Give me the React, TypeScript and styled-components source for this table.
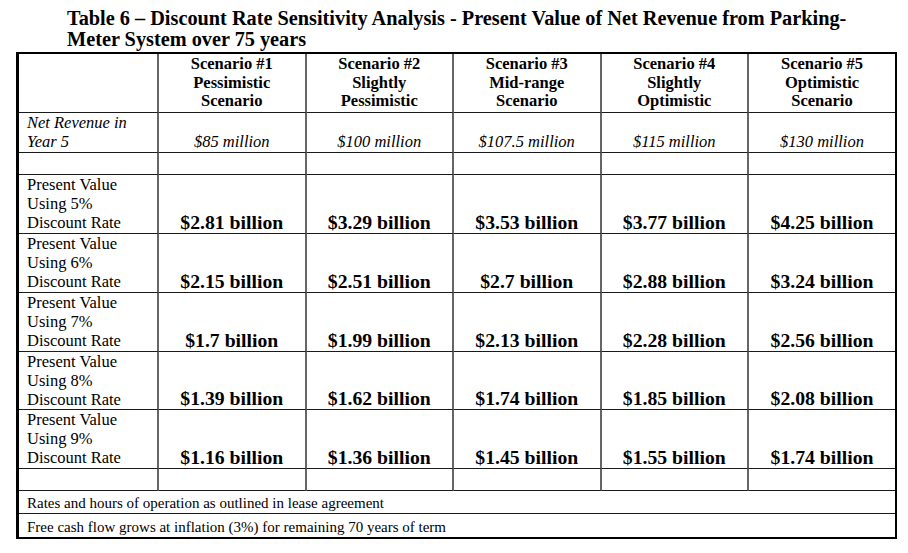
import React from "react";
import styled, { createGlobalStyle } from "styled-components";

const GlobalStyle = createGlobalStyle`
  body {
    margin: 0;
    background: #fff;
    color: #000;
    font-family: "Liberation Serif", "Times New Roman", serif;
  }
`;

const Page = styled.div`
  width: 908px;
  height: 553px;
  box-sizing: border-box;
  padding-top: 8px;
`;

const Title = styled.h1`
  margin: 0 0 2px 67px;
  font-size: 20.3px;
  line-height: 21px;
  font-weight: bold;
  white-space: nowrap;
`;

const Grid = styled.div`
  margin-left: 16px;
  width: 881px;
  box-sizing: border-box;
  display: grid;
  grid-template-columns: 140px repeat(4, 147.5px) 1fr;
  grid-template-rows: 59px 40px 22px 59px 59px 59px 58px 59px 22px 23px 23px;
  border: 2px solid #000;
  border-left-width: 3px;
`;

const Cell = styled.div<{ $last?: boolean; $bottom?: boolean }>`
  box-sizing: border-box;
  border-right: ${(p) => (p.$last ? "none" : "2px solid #666")};
  border-bottom: ${(p) => (p.$bottom ? "none" : "1px solid #1a1a1a")};
  min-width: 0;
`;

const HeadCell = styled(Cell)`
  display: flex;
  flex-direction: column;
  align-items: center;
  padding-top: 1px;
  font-size: 16.5px;
  line-height: 18.5px;
  font-weight: bold;
  text-align: center;
`;

const LabelCell = styled(Cell)<{ $italic?: boolean }>`
  padding-left: 8px;
  font-size: 16.5px;
  line-height: 19px;
  font-style: ${(p) => (p.$italic ? "italic" : "normal")};
  span {
    display: block;
    white-space: nowrap;
  }
`;

const RevenueCell = styled(Cell)`
  display: flex;
  align-items: flex-end;
  justify-content: center;
  padding-bottom: 1px;
  font-size: 16.5px;
  line-height: 19px;
  font-style: italic;
`;

const ValueCell = styled(Cell)`
  display: flex;
  align-items: flex-end;
  justify-content: center;
  font-size: 19.7px;
  line-height: 22px;
  font-weight: bold;
  white-space: nowrap;
`;

const NoteCell = styled(Cell)`
  grid-column: 1 / -1;
  display: flex;
  align-items: flex-end;
  padding: 0 0 1px 8px;
  font-size: 15px;
  line-height: 17px;
`;

const scenarios = [
  ["Scenario #1", "Pessimistic", "Scenario"],
  ["Scenario #2", "Slightly", "Pessimistic"],
  ["Scenario #3", "Mid-range", "Scenario"],
  ["Scenario #4", "Slightly", "Optimistic"],
  ["Scenario #5", "Optimistic", "Scenario"],
];

const revenues = ["$85 million", "$100 million", "$107.5 million", "$115 million", "$130 million"];

const rates = [
  { rate: "5%", values: ["2.81", "3.29", "3.53", "3.77", "4.25"] },
  { rate: "6%", values: ["2.15", "2.51", "2.7", "2.88", "3.24"] },
  { rate: "7%", values: ["1.7", "1.99", "2.13", "2.28", "2.56"] },
  { rate: "8%", values: ["1.39", "1.62", "1.74", "1.85", "2.08"] },
  { rate: "9%", values: ["1.16", "1.36", "1.45", "1.55", "1.74"] },
];

function BlankRow() {
  return (
    <>
      {[0, 1, 2, 3, 4, 5].map((i) => (
        <Cell key={i} $last={i === 5} />
      ))}
    </>
  );
}

export default function App() {
  return (
    <Page>
      <GlobalStyle />
      <Title>
        Table 6 – Discount Rate Sensitivity Analysis - Present Value of Net Revenue from Parking-
        <br />
        Meter System over 75 years
      </Title>
      <Grid>
        <Cell />
        {scenarios.map((lines, i) => (
          <HeadCell key={i} $last={i === 4}>
            {lines.map((l) => (
              <span key={l}>{l}</span>
            ))}
          </HeadCell>
        ))}

        <LabelCell $italic>
          <span>Net Revenue in</span>
          <span>Year 5</span>
        </LabelCell>
        {revenues.map((r, i) => (
          <RevenueCell key={r} $last={i === 4}>
            {r}
          </RevenueCell>
        ))}

        <BlankRow />

        {rates.map((row) => (
          <React.Fragment key={row.rate}>
            <LabelCell>
              <span>Present Value</span>
              <span>Using {row.rate}</span>
              <span>Discount Rate</span>
            </LabelCell>
            {row.values.map((v, i) => (
              <ValueCell key={i} $last={i === 4}>
                ${v} billion
              </ValueCell>
            ))}
          </React.Fragment>
        ))}

        <BlankRow />

        <NoteCell $last>Rates and hours of operation as outlined in lease agreement</NoteCell>
        <NoteCell $last $bottom>
          Free cash flow grows at inflation (3%) for remaining 70 years of term
        </NoteCell>
      </Grid>
    </Page>
  );
}
